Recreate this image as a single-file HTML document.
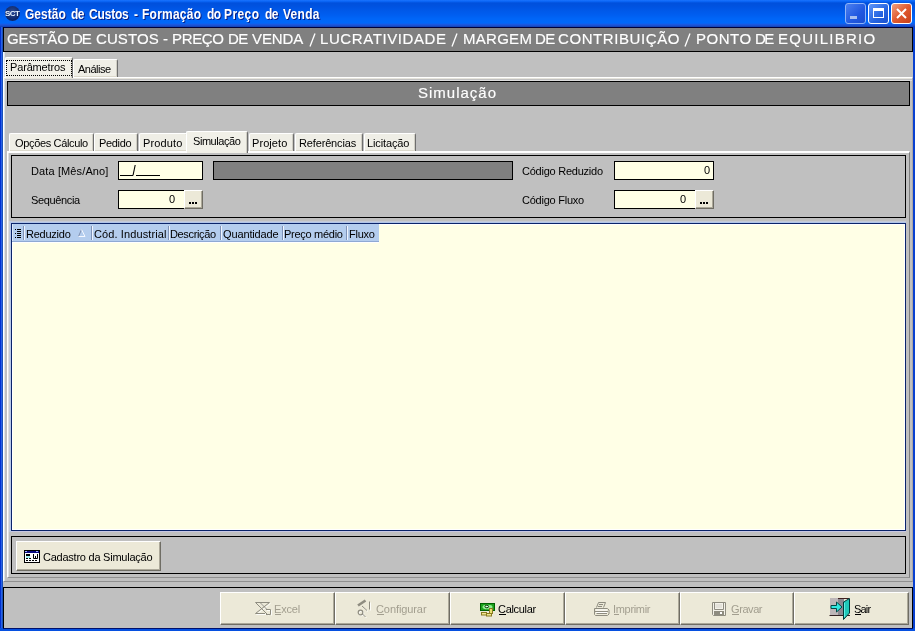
<!DOCTYPE html>
<html><head><meta charset="utf-8">
<style>
*{margin:0;padding:0;box-sizing:border-box}
html,body{width:915px;height:631px;overflow:hidden;background:#c0c0c0}
body{position:relative;font-family:"Liberation Sans",sans-serif;font-size:11px;color:#000}
.a{position:absolute}
.t{position:absolute;white-space:nowrap;line-height:20px;will-change:transform}
.bl{background:#0650e0}
.tab{position:absolute;background:#efeee6;border-top:1px solid #fff;border-left:1px solid #fff;border-right:1px solid #6e6e6e;border-radius:2px 2px 0 0;box-shadow:inset 0 -1px #dcd9cc,inset -1px 0 #d0cec4}
.fld{position:absolute;background:#ffffe6;border:1px solid #000}
.btn{position:absolute;background:#ece9d8;border-top:1px solid #fff;border-left:1px solid #fff;border-right:1px solid #6f6d64;border-bottom:1px solid #6f6d64;box-shadow:inset -1px -1px #aca899}
.ul{position:absolute;height:1px}
</style></head><body>
<div class="a" style="left:0;top:0;width:915px;height:27px;background:linear-gradient(#1a74ff 0px,#0a64f4 1.5px,#0050dc 3px,#0052e0 6px,#0058e8 10px,#005ef0 15px,#0066f8 19px,#0068fa 23px,#1a58e0 24.5px,#1a50d0 25.5px,#1040b0 27px)"></div>
<div class="a" style="left:0;top:27px;width:3px;height:604px;background:linear-gradient(90deg,#0030d0 0 1px,#2860e8 1px 2px,#1850b8 2px 3px)"></div>
<div class="a" style="left:913px;top:27px;width:2px;height:604px;background:#0840d0"></div>
<div class="a bl" style="left:0;top:628px;width:915px;height:3px"></div>
<div class="a" style="left:3px;top:628px;width:910px;height:1px;background:#00106a"></div>
<div class="t" style="left:25px;top:5px;font-size:12px;font-weight:bold;color:#fff;letter-spacing:0.04px;text-shadow:1px 1px #0a1e80;transform:scaleY(1.22);transform-origin:0 14px">Gestão</div>
<div class="t" style="left:71px;top:5px;font-size:12px;font-weight:bold;color:#fff;letter-spacing:-0.6px;text-shadow:1px 1px #0a1e80;transform:scaleY(1.22);transform-origin:0 14px">de</div>
<div class="t" style="left:89px;top:5px;font-size:12px;font-weight:bold;color:#fff;letter-spacing:-0.18px;text-shadow:1px 1px #0a1e80;transform:scaleY(1.22);transform-origin:0 14px">Custos</div>
<div class="t" style="left:134px;top:5px;font-size:12px;font-weight:bold;color:#fff;letter-spacing:0px;text-shadow:1px 1px #0a1e80;transform:scaleY(1.22);transform-origin:0 14px">-</div>
<div class="t" style="left:142px;top:5px;font-size:12px;font-weight:bold;color:#fff;letter-spacing:0.24px;text-shadow:1px 1px #0a1e80;transform:scaleY(1.22);transform-origin:0 14px">Formação</div>
<div class="t" style="left:207px;top:5px;font-size:12px;font-weight:bold;color:#fff;letter-spacing:-0.6px;text-shadow:1px 1px #0a1e80;transform:scaleY(1.22);transform-origin:0 14px">do</div>
<div class="t" style="left:224px;top:5px;font-size:12px;font-weight:bold;color:#fff;letter-spacing:0.42px;text-shadow:1px 1px #0a1e80;transform:scaleY(1.22);transform-origin:0 14px">Preço</div>
<div class="t" style="left:265px;top:5px;font-size:12px;font-weight:bold;color:#fff;letter-spacing:-0.6px;text-shadow:1px 1px #0a1e80;transform:scaleY(1.22);transform-origin:0 14px">de</div>
<div class="t" style="left:283px;top:5px;font-size:12px;font-weight:bold;color:#fff;letter-spacing:0.27px;text-shadow:1px 1px #0a1e80;transform:scaleY(1.22);transform-origin:0 14px">Venda</div>
<div class="a" style="left:5px;top:6px;width:15px;height:15px;border-radius:50%;background:radial-gradient(circle at 50% 40%,#2c4c98,#0c2464 70%,#1c3c94)"></div>
<div class="t" style="left:5px;top:4px;font-size:8px;font-weight:bold;color:#e8f4ff;letter-spacing:-0.5px">SCT</div>
<div class="a" style="left:845px;top:3px;width:21px;height:21px;border:1px solid #8fb4f8;border-radius:3px;background:linear-gradient(135deg,#4c80f0,#2058e0 60%,#1a4ed0)"></div>
<div class="a" style="left:850px;top:16px;width:7px;height:3px;background:#a8c0f0"></div>
<div class="a" style="left:868px;top:3px;width:21px;height:21px;border:1px solid #fff;border-radius:3px;background:linear-gradient(135deg,#5f95f8,#2463e0 60%,#1b52d0)"></div>
<div class="a" style="left:873px;top:8px;width:11px;height:10px;border:1px solid #fff;border-top:3px solid #fff"></div>
<div class="a" style="left:891px;top:3px;width:21px;height:21px;border:1px solid #fff;border-radius:3px;background:linear-gradient(135deg,#f0a080,#e05a30 50%,#c8401a)"></div>
<svg class="a" style="left:891px;top:3px" width="21" height="21"><path d="M6 6 L15 15 M15 6 L6 15" stroke="#fff" stroke-width="2"/></svg>
<div class="a" style="left:3px;top:27px;width:910px;height:25px;background:#808080;border:1px solid #000;border-top-color:#000038"></div>
<div class="t" style="left:7px;top:29px;font-size:15px;font-weight:normal;color:#fff;letter-spacing:-0.14px;-webkit-text-stroke:0.15px #fff">GESTÃO</div>
<div class="t" style="left:72px;top:29px;font-size:15px;font-weight:normal;color:#fff;letter-spacing:-1.2px;-webkit-text-stroke:0.15px #fff">DE</div>
<div class="t" style="left:96px;top:29px;font-size:15px;font-weight:normal;color:#fff;letter-spacing:0.1px;-webkit-text-stroke:0.15px #fff">CUSTOS</div>
<div class="t" style="left:163px;top:29px;font-size:15px;font-weight:normal;color:#fff;letter-spacing:0px;-webkit-text-stroke:0.15px #fff">-</div>
<div class="t" style="left:172px;top:29px;font-size:15px;font-weight:normal;color:#fff;letter-spacing:-0.325px;-webkit-text-stroke:0.15px #fff">PREÇO</div>
<div class="t" style="left:228px;top:29px;font-size:15px;font-weight:normal;color:#fff;letter-spacing:-0.7px;-webkit-text-stroke:0.15px #fff">DE</div>
<div class="t" style="left:252px;top:29px;font-size:15px;font-weight:normal;color:#fff;letter-spacing:-0.125px;-webkit-text-stroke:0.15px #fff">VENDA</div>
<svg class="a" style="left:309px;top:32px" width="8" height="16"><path d="M1 14.5 L6 1.5" stroke="#fff" stroke-width="1.3"/></svg>
<div class="t" style="left:320px;top:29px;font-size:15px;font-weight:normal;color:#fff;letter-spacing:0.583px;-webkit-text-stroke:0.15px #fff">LUCRATIVIDADE</div>
<svg class="a" style="left:451px;top:32px" width="8" height="16"><path d="M1 14.5 L6 1.5" stroke="#fff" stroke-width="1.3"/></svg>
<div class="t" style="left:463px;top:29px;font-size:15px;font-weight:normal;color:#fff;letter-spacing:0.28px;-webkit-text-stroke:0.15px #fff">MARGEM</div>
<div class="t" style="left:535px;top:29px;font-size:15px;font-weight:normal;color:#fff;letter-spacing:-0.7px;-webkit-text-stroke:0.15px #fff">DE</div>
<div class="t" style="left:558px;top:29px;font-size:15px;font-weight:normal;color:#fff;letter-spacing:0.582px;-webkit-text-stroke:0.15px #fff">CONTRIBUIÇÃO</div>
<svg class="a" style="left:684px;top:32px" width="8" height="16"><path d="M1 14.5 L6 1.5" stroke="#fff" stroke-width="1.3"/></svg>
<div class="t" style="left:696px;top:29px;font-size:15px;font-weight:normal;color:#fff;letter-spacing:0.5px;-webkit-text-stroke:0.15px #fff">PONTO</div>
<div class="t" style="left:755px;top:29px;font-size:15px;font-weight:normal;color:#fff;letter-spacing:-1.5px;-webkit-text-stroke:0.15px #fff">DE</div>
<div class="t" style="left:778px;top:29px;font-size:15px;font-weight:normal;color:#fff;letter-spacing:1.256px;-webkit-text-stroke:0.15px #fff">EQUILIBRIO</div>
<div class="a" style="left:3px;top:52px;width:1px;height:530px;background:#f4f8ff"></div>
<div class="a" style="left:4px;top:52px;width:1px;height:530px;background:#dde4e8"></div>
<div class="a" style="left:8px;top:152px;width:1px;height:425px;background:#e0e0e0"></div>
<div class="a" style="left:3px;top:77px;width:910px;height:505px;border-top:1px solid #fff;border-left:1px solid #fff;border-right:1px solid #aaa4a4;border-bottom:1px solid #909090"></div>
<div class="a" style="left:4px;top:78px;width:908px;height:1px;background:#e6e4dc"></div>
<div class="a" style="left:4px;top:80px;width:908px;height:1px;background:#dcdcdc"></div>
<div class="tab" style="left:5px;top:57px;width:68px;height:21px;z-index:2;background:#f1f0e8;box-shadow:inset -1px 0 #d0cec4"></div>
<div class="a" style="left:6px;top:60px;width:66px;height:16px;border:1px dotted #000;z-index:3"></div>
<div class="t" style="left:10px;top:57px;font-size:11px;font-weight:normal;color:#000;letter-spacing:-0.16px;z-index:3">Parâmetros</div>
<div class="tab" style="left:73px;top:59px;width:45px;height:18px"></div>
<div class="t" style="left:78px;top:59px;font-size:11px;font-weight:normal;color:#000;letter-spacing:-0.5px;">Análise</div>
<div class="a" style="left:7px;top:81px;width:903px;height:25px;background:#808080;border:1px solid #000"></div>
<div class="t" style="left:418px;top:83px;font-size:15px;font-weight:normal;color:#fff;letter-spacing:1.0px;-webkit-text-stroke:0.15px #fff">Simulação</div>
<div class="a" style="left:7px;top:151px;width:903px;height:427px;border-top:2px solid #fff;border-left:1px solid #fff;border-right:1px solid #808080;border-bottom:1px solid #909090"></div>
<div class="tab" style="left:9px;top:133px;width:85px;height:18px"></div>
<div class="t" style="left:15px;top:133px;font-size:11px;font-weight:normal;color:#000;letter-spacing:-0.346px;">Opções Cálculo</div>
<div class="tab" style="left:94px;top:133px;width:44px;height:18px"></div>
<div class="t" style="left:99px;top:133px;font-size:11px;font-weight:normal;color:#000;letter-spacing:-0.32px;">Pedido</div>
<div class="tab" style="left:139px;top:133px;width:49px;height:18px"></div>
<div class="t" style="left:143px;top:133px;font-size:11px;font-weight:normal;color:#000;letter-spacing:0.15px;">Produto</div>
<div class="tab" style="left:249px;top:133px;width:45px;height:18px"></div>
<div class="t" style="left:252px;top:133px;font-size:11px;font-weight:normal;color:#000;letter-spacing:0.067px;">Projeto</div>
<div class="tab" style="left:295px;top:133px;width:68px;height:18px"></div>
<div class="t" style="left:299px;top:133px;font-size:11px;font-weight:normal;color:#000;letter-spacing:-0.15px;">Referências</div>
<div class="tab" style="left:364px;top:133px;width:52px;height:18px"></div>
<div class="t" style="left:367px;top:133px;font-size:11px;font-weight:normal;color:#000;letter-spacing:-0.125px;">Licitação</div>
<div class="tab" style="left:186px;top:131px;width:62px;height:22px;z-index:2;background:#f1f0e8;box-shadow:inset -1px 0 #d0cec4"></div>
<div class="t" style="left:193px;top:131px;font-size:11px;font-weight:normal;color:#000;letter-spacing:-0.44px;z-index:3">Simulação</div>
<div class="a" style="left:11px;top:155px;width:895px;height:63px;border:1px solid #000"></div>
<div class="t" style="left:31px;top:161px;font-size:11px;font-weight:normal;color:#000;letter-spacing:0.12px;">Data [Mês/Ano]</div>
<div class="fld" style="left:118px;top:161px;width:85px;height:19px"></div>
<div class="a" style="left:120px;top:175px;width:13px;height:1px;background:#000"></div>
<div class="a" style="left:136px;top:175px;width:24px;height:1px;background:#000"></div>
<svg class="a" style="left:130px;top:163px" width="8" height="14"><path d="M3 12.5 L5.2 2" stroke="#000" stroke-width="1.1"/></svg>
<div class="a" style="left:213px;top:161px;width:300px;height:19px;background:#808080;border:1px solid #000"></div>
<div class="t" style="left:31px;top:190px;font-size:11px;font-weight:normal;color:#000;letter-spacing:-0.36px;">Sequência</div>
<div class="fld" style="left:118px;top:190px;width:67px;height:19px"></div>
<div class="t" style="left:169px;top:189px;font-size:11px;font-weight:normal;color:#000;letter-spacing:0.0px;">0</div>
<div class="btn" style="left:184px;top:190px;width:19px;height:19px"></div>
<div class="a" style="left:189px;top:202px;width:2px;height:2px;background:#000"></div><div class="a" style="left:192px;top:202px;width:2px;height:2px;background:#000"></div><div class="a" style="left:195px;top:202px;width:2px;height:2px;background:#000"></div>
<div class="t" style="left:522px;top:161px;font-size:11px;font-weight:normal;color:#000;letter-spacing:-0.24px;">Código Reduzido</div>
<div class="fld" style="left:614px;top:161px;width:100px;height:19px"></div>
<div class="t" style="left:704px;top:160px;font-size:11px;font-weight:normal;color:#000;letter-spacing:0.0px;">0</div>
<div class="t" style="left:522px;top:190px;font-size:11px;font-weight:normal;color:#000;letter-spacing:-0.24px;">Código Fluxo</div>
<div class="fld" style="left:614px;top:190px;width:82px;height:19px"></div>
<div class="t" style="left:680px;top:189px;font-size:11px;font-weight:normal;color:#000;letter-spacing:0.0px;">0</div>
<div class="btn" style="left:695px;top:190px;width:19px;height:19px"></div>
<div class="a" style="left:700px;top:202px;width:2px;height:2px;background:#000"></div><div class="a" style="left:703px;top:202px;width:2px;height:2px;background:#000"></div><div class="a" style="left:706px;top:202px;width:2px;height:2px;background:#000"></div>
<div class="a" style="left:11px;top:221px;width:895px;height:1px;background:#c4cad8"></div>
<div class="a" style="left:11px;top:222px;width:895px;height:1px;background:#b0c4e8"></div>
<div class="a" style="left:11px;top:531px;width:895px;height:1px;background:#c8c8e4"></div>
<div class="a" style="left:10px;top:221px;width:1px;height:311px;background:#b8c8e8"></div>
<div class="a" style="left:9px;top:221px;width:1px;height:311px;background:#c4cad8"></div>
<div class="a" style="left:11px;top:223px;width:895px;height:308px;background:#ffffe6;border:1px solid #0a246a;box-shadow:inset 0 0 0 1px #fff"></div>
<div class="a" style="left:12px;top:224px;width:367px;height:18px;background:#b4cdee;border-bottom:1px solid #8fa9d4"></div>
<div class="a" style="left:12px;top:224px;width:1px;height:17px;background:#dce8f8"></div>
<div class="a" style="left:12px;top:242px;width:367px;height:1px;background:#fff"></div>
<svg class="a" style="left:12px;top:224px" width="367" height="18">
<g fill="#000"><rect x="3" y="5" width="1" height="1"/><rect x="3" y="9" width="1" height="1"/><rect x="3" y="13" width="1" height="1"/>
<rect x="5" y="5" width="4" height="1"/><rect x="5" y="7" width="4" height="1"/><rect x="5" y="9" width="4" height="1"/><rect x="5" y="11" width="4" height="1"/><rect x="5" y="13" width="4" height="1"/></g>
<g fill="#7f93b8"><rect x="11" y="2" width="1" height="14"/><rect x="79" y="2" width="1" height="14"/><rect x="156" y="2" width="1" height="14"/><rect x="208" y="2" width="1" height="14"/><rect x="270" y="2" width="1" height="14"/><rect x="334" y="2" width="1" height="14"/></g>
<g fill="#eef4ff"><rect x="12" y="2" width="1" height="14"/><rect x="80" y="2" width="1" height="14"/><rect x="157" y="2" width="1" height="14"/><rect x="209" y="2" width="1" height="14"/><rect x="271" y="2" width="1" height="14"/><rect x="335" y="2" width="1" height="14"/></g>
<path d="M66.5 12.5 L69.5 5.5" stroke="#8090b0" stroke-width="1" fill="none"/>
<path d="M69.5 5.5 L73 12.5 L66.5 12.5" stroke="#f4f8ff" stroke-width="1" fill="none"/>
</svg>
<div class="t" style="left:26px;top:224px;font-size:11px;font-weight:normal;color:#000;letter-spacing:-0.243px;">Reduzido</div>
<div class="t" style="left:94px;top:224px;font-size:11px;font-weight:normal;color:#000;letter-spacing:0.114px;">Cód. Industrial</div>
<div class="t" style="left:170px;top:224px;font-size:11px;font-weight:normal;color:#000;letter-spacing:-0.35px;">Descrição</div>
<div class="t" style="left:223px;top:224px;font-size:11px;font-weight:normal;color:#000;letter-spacing:-0.133px;">Quantidade</div>
<div class="t" style="left:284px;top:224px;font-size:11px;font-weight:normal;color:#000;letter-spacing:-0.28px;">Preço médio</div>
<div class="t" style="left:349px;top:224px;font-size:11px;font-weight:normal;color:#000;letter-spacing:-0.25px;">Fluxo</div>
<div class="a" style="left:11px;top:536px;width:895px;height:38px;border:1px solid #000"></div>
<div class="btn" style="left:16px;top:541px;width:145px;height:30px"></div>
<svg class="a" style="left:24px;top:550px" width="16" height="13">
<rect x="0.5" y="0.5" width="15" height="12" fill="#fff" stroke="#000"/>
<rect x="1" y="1" width="14" height="2" fill="#0a0a80"/>
<rect x="1" y="1" width="2" height="1" fill="#a0b0ff"/><rect x="12" y="1" width="2" height="1" fill="#a0b0ff"/>
<rect x="2" y="6" width="4" height="2" fill="#9ef0f0"/>
<rect x="2" y="4" width="4" height="2" fill="#000"/>
<rect x="2" y="8" width="2" height="1" fill="#000"/><rect x="5" y="8" width="2" height="1" fill="#000"/>
<path d="M9.5 4 V8.5 H13.5 V4 M11.5 6 V8.5" stroke="#000" fill="none"/>
<rect x="2" y="10" width="2" height="1" fill="#000"/><rect x="5" y="10" width="2" height="1" fill="#000"/><rect x="8" y="10" width="2" height="1" fill="#000"/><rect x="11" y="10" width="2" height="1" fill="#000"/>
</svg>
<div class="t" style="left:43px;top:547px;font-size:11px;font-weight:normal;color:#000;letter-spacing:-0.24px;">Cadastro da Simulação</div>
<div class="a" style="left:3px;top:587px;width:910px;height:41px;border-top:1px solid #000;border-left:1px solid #000;border-right:1px solid #000"></div>
<div class="btn" style="left:220px;top:592px;width:115px;height:33px"></div>
<div class="t" style="left:274px;top:599px;font-size:11px;font-weight:normal;color:#a29e8f;letter-spacing:-0.175px;">Excel</div>
<div class="ul" style="left:275px;top:614px;width:6px;background:#a29e8f"></div>
<div class="btn" style="left:335px;top:592px;width:115px;height:33px"></div>
<div class="t" style="left:376px;top:599px;font-size:11px;font-weight:normal;color:#a29e8f;letter-spacing:-0.089px;">Configurar</div>
<div class="ul" style="left:377px;top:614px;width:7px;background:#a29e8f"></div>
<div class="btn" style="left:450px;top:592px;width:115px;height:33px"></div>
<div class="t" style="left:498px;top:599px;font-size:11px;font-weight:normal;color:#000;letter-spacing:-0.314px;">Calcular</div>
<div class="ul" style="left:499px;top:614px;width:7px;background:#000"></div>
<div class="btn" style="left:565px;top:592px;width:115px;height:33px"></div>
<div class="t" style="left:613px;top:599px;font-size:11px;font-weight:normal;color:#a29e8f;letter-spacing:-0.314px;">Imprimir</div>
<div class="ul" style="left:614px;top:614px;width:5px;background:#a29e8f"></div>
<div class="btn" style="left:680px;top:592px;width:114px;height:33px"></div>
<div class="t" style="left:731px;top:599px;font-size:11px;font-weight:normal;color:#a29e8f;letter-spacing:-0.42px;">Gravar</div>
<div class="ul" style="left:732px;top:614px;width:7px;background:#a29e8f"></div>
<div class="btn" style="left:794px;top:592px;width:115px;height:33px"></div>
<div class="t" style="left:854px;top:599px;font-size:11px;font-weight:normal;color:#000;letter-spacing:-0.8px;">Sair</div>
<div class="ul" style="left:855px;top:614px;width:6px;background:#000"></div>

<svg class="a" style="left:252px;top:598px" width="22" height="20" fill="none">
<g stroke="#fcfcf8" transform="translate(1,1)"><path d="M3.5 4.5 L15.5 16.5 M8 4.5 L14.5 11 M17.5 4.5 L3.5 15.5 H13 M14 11.5 H18.5 V16.5"/></g>
<g stroke="#8e8c80"><path d="M3.5 4.5 H17.5 M3.5 4.5 L15.5 16.5 M8 4.5 L14.5 11 M17.5 4.5 L3.5 15.5 H13 M14 11.5 H18.5 V16.5 H14"/></g>
</svg>
<svg class="a" style="left:354px;top:597px" width="20" height="22" fill="none">
<g stroke="#fcfcf8" transform="translate(1,1)"><path d="M8 9 L13 13.5 M15.5 4.5 V12.5 M8.5 17 L11.5 20"/><circle cx="6.5" cy="15.5" r="2.3"/></g>
<g stroke="#8e8c80"><path d="M4 8.5 L11.5 3.5" stroke-width="2.6"/><path d="M8 9 L13 13.5 M15.5 4.5 V12.5 M8.5 17 L11.5 20"/><circle cx="6.5" cy="15.5" r="2.3" stroke-width="1.2"/></g>
</svg>
<svg class="a" style="left:479px;top:602px" width="17" height="15">
<rect x="1.5" y="1.5" width="14" height="7" fill="#1aa01a" stroke="#006000"/>
<ellipse cx="8.5" cy="5" rx="5" ry="2.3" fill="#90ee90"/>
<ellipse cx="7.8" cy="4.5" rx="1.8" ry="1.3" fill="#e0ffe0" stroke="#003000"/>
<rect x="10.5" y="6.5" width="3" height="5" fill="#e8e070" stroke="#8a7a20"/>
<rect x="2.5" y="10.5" width="5" height="2.5" fill="#f0e890" stroke="#8a7a20"/>
<rect x="7.5" y="11.5" width="5" height="2.5" fill="#f0e890" stroke="#8a7a20"/>
</svg>
<svg class="a" style="left:593px;top:601px" width="18" height="16" fill="none">
<g stroke="#8e8c80"><path d="M5.5 1.5 H12.5 L10.5 6.5 M5.5 1.5 L3.5 6.5 M6 3.5 H10 M5 5.5 H9 M1.5 7.5 H14.5 L16 9 V13 L14.5 14.5 H2.5 L1.5 13.5 Z M2 10.5 H15 M3.5 12.5 H14"/></g>
<g stroke="#fff"><path d="M3 9 H14 M3 11.5 H14"/></g>
</svg>
<svg class="a" style="left:711px;top:601px" width="16" height="16" fill="none">
<path d="M1.5 1.5 H14.5 V14.5 H2.5 L1.5 13.5 Z" stroke="#8e8c80" fill="#f4f2ea"/>
<path d="M3.5 1.5 V8.5 H12.5 V1.5" stroke="#8e8c80"/>
<rect x="4.5" y="3" width="6.5" height="4" fill="#e4e2da"/>
<rect x="3" y="10" width="10" height="4" fill="#8e8c80"/>
<rect x="9" y="11" width="2" height="2" fill="#fff"/>
</svg>
<svg class="a" style="left:829px;top:597px" width="22" height="24">
<rect x="1" y="1" width="8" height="17" fill="#bdb6b8"/>
<rect x="9" y="1" width="6" height="17" fill="#8a8890"/>
<path d="M9 1.5 H20" stroke="#402020" stroke-width="1"/>
<path d="M0.5 18.5 H21" stroke="#302020" stroke-width="1"/>
<path d="M14.5 5 L20.5 1.5 V16 L14.5 22.5 Z" fill="#20c8b8" stroke="#003838" stroke-width="1"/>
<path d="M15.5 6 V20" stroke="#60f0e8"/>
<path d="M2 8.5 H7.5 V5 L13 10 L7.5 15 V11.5 H2 Z" fill="#30e8e0" stroke="#004848" stroke-width="1"/>
</svg>

</body></html>
